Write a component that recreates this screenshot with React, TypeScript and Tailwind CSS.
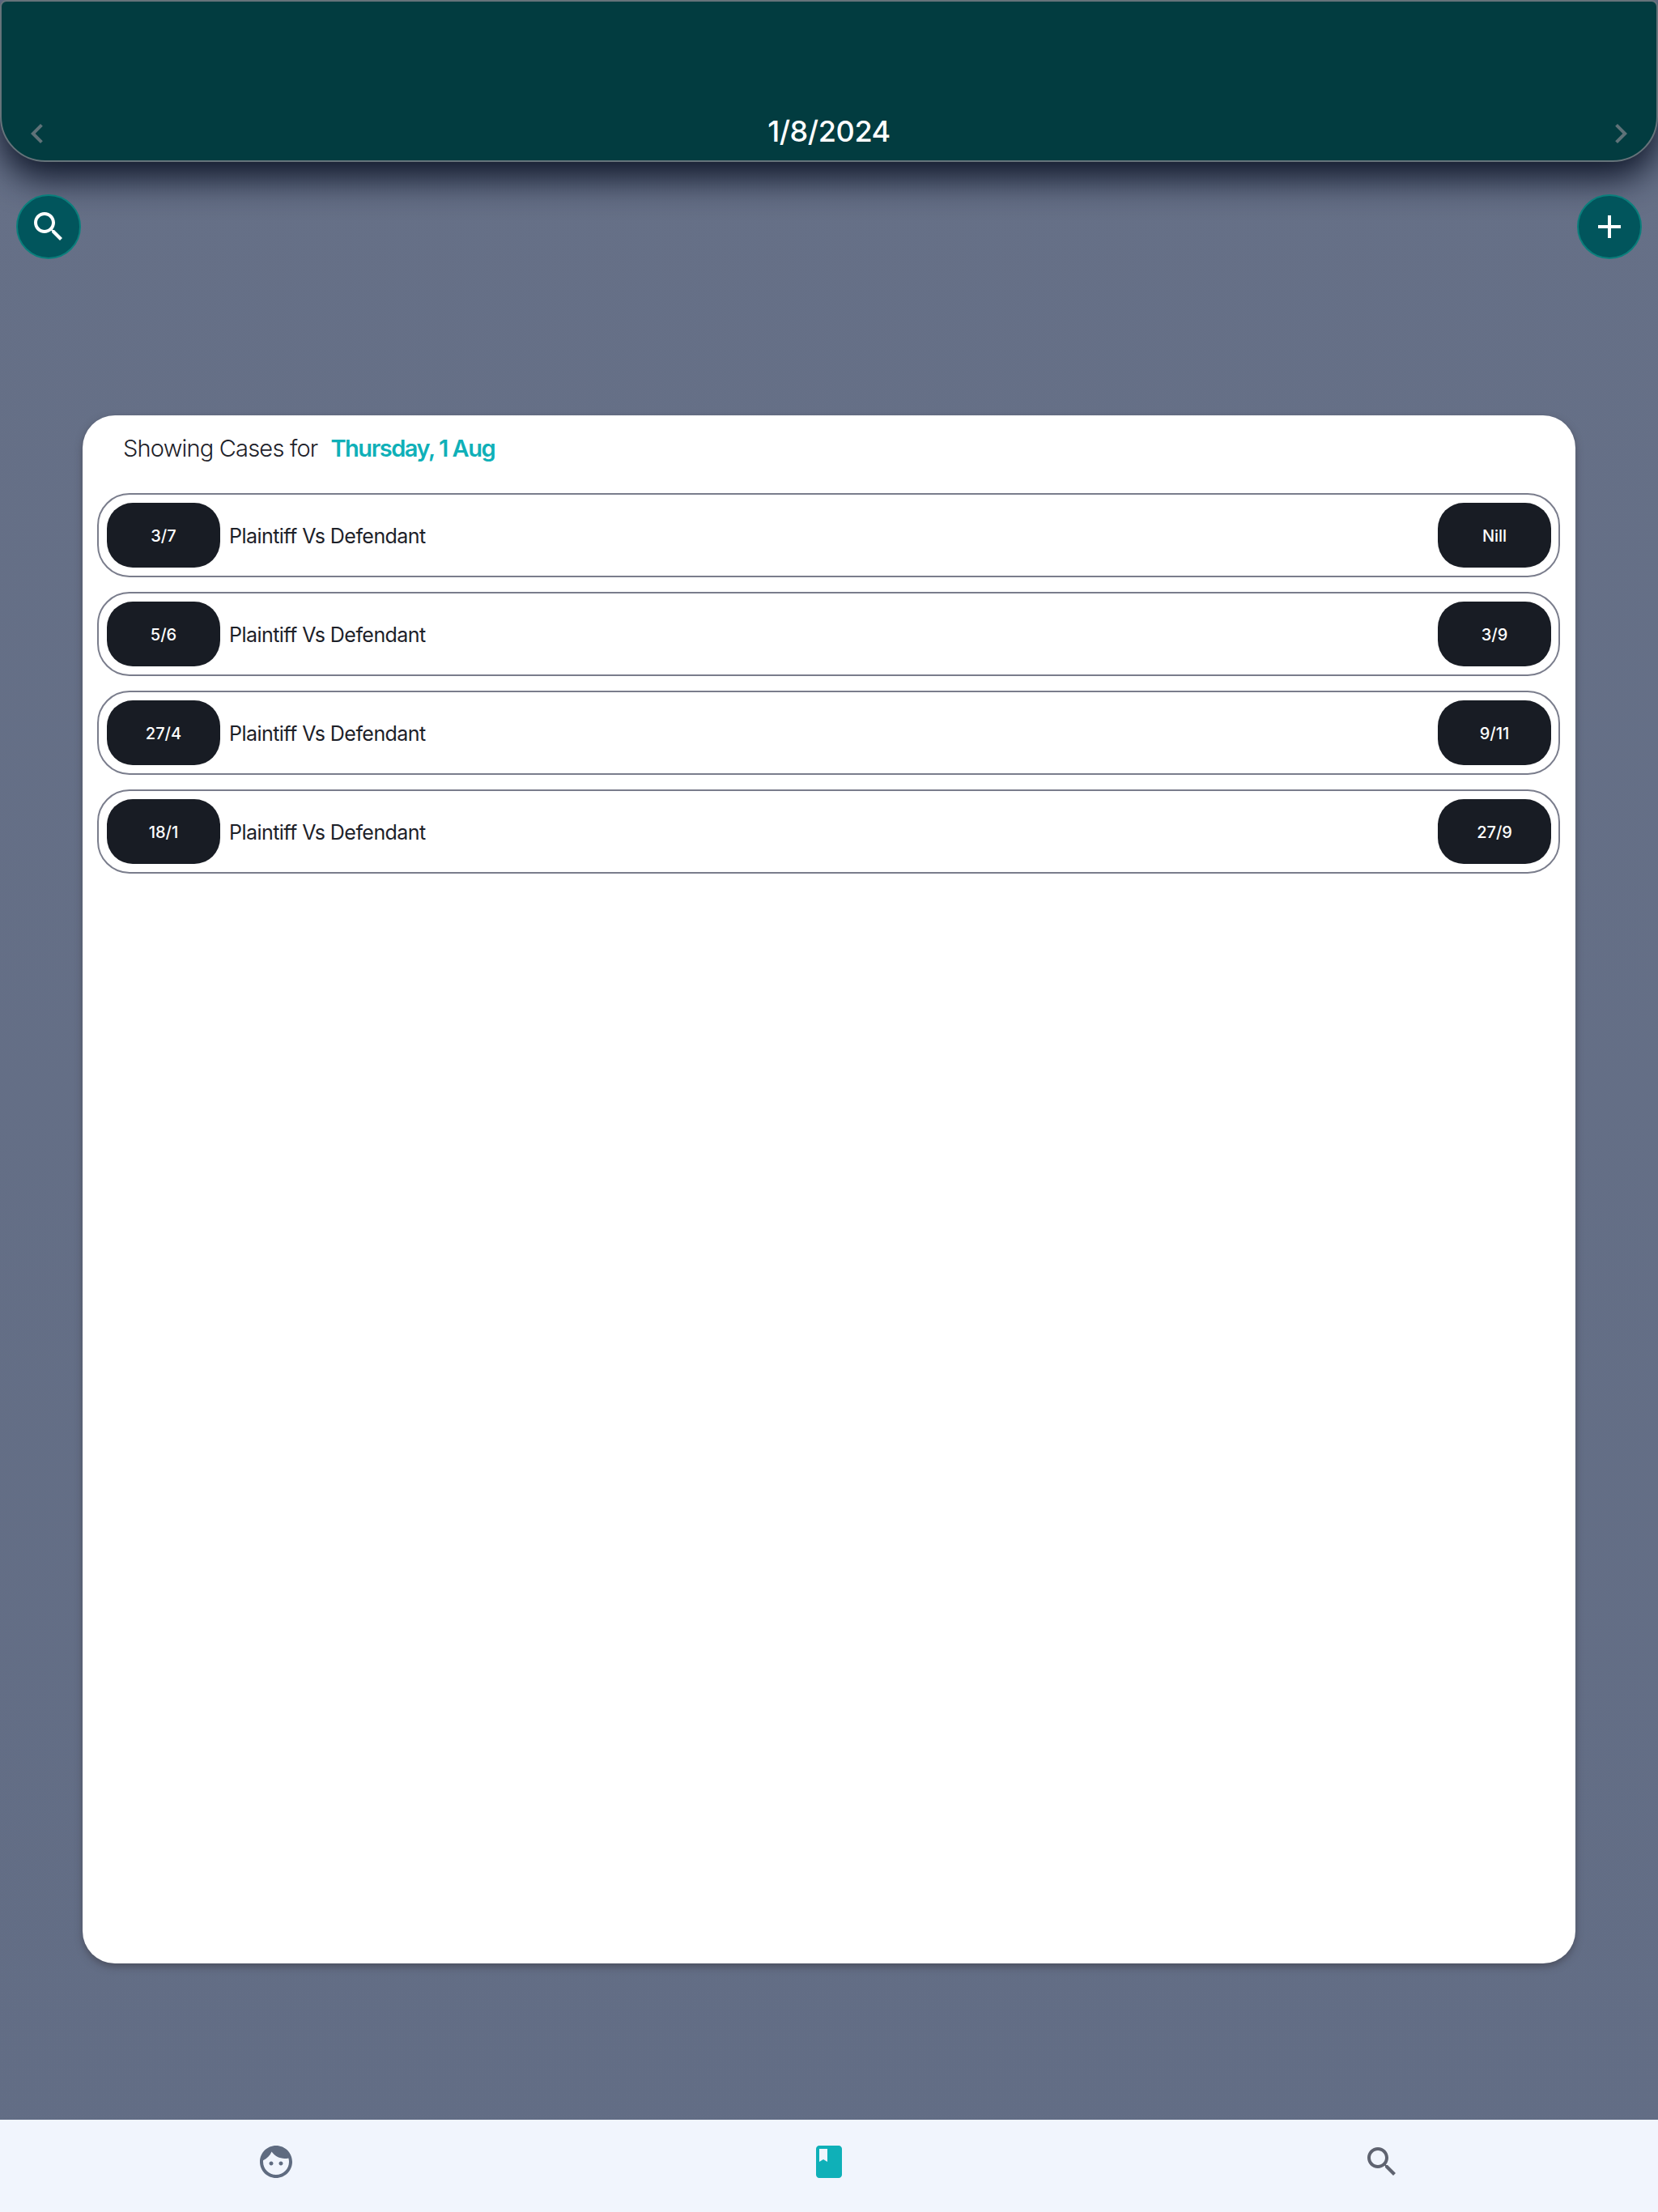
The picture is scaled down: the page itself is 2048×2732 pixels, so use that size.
import React from 'react';

const SEARCH_PATH =
  'M15.5 14h-.79l-.28-.27C15.41 12.59 16 11.11 16 9.5 16 5.91 13.09 3 9.5 3S3 5.91 3 9.5 5.91 16 9.5 16c1.61 0 3.09-.59 4.23-1.57l.27.28v.79l5 4.99L20.49 19l-4.99-5zm-6 0C7.01 14 5 11.99 5 9.5S7.01 5 9.5 5 14 7.01 14 9.5 11.99 14 9.5 14z';
const FACE_PATH =
  'M9 11.75c-.69 0-1.25.56-1.25 1.25s.56 1.25 1.25 1.25 1.25-.56 1.25-1.25-.56-1.25-1.25-1.25zm6 0c-.69 0-1.25.56-1.25 1.25s.56 1.25 1.25 1.25 1.25-.56 1.25-1.25-.56-1.25-1.25-1.25zM12 2C6.48 2 2 6.48 2 12s4.48 10 10 10 10-4.48 10-10S17.52 2 12 2zm0 18c-4.41 0-8-3.59-8-8 0-.29.02-.58.05-.86 2.36-1.05 4.23-2.98 5.21-5.37C11.07 8.33 14.05 10 17.42 10c.78 0 1.53-.09 2.25-.26.21.71.33 1.47.33 2.26 0 4.41-3.59 8-8 8z';
const BOOK_PATH =
  'M18 2H6c-1.1 0-2 .9-2 2v16c0 1.1.9 2 2 2h12c1.1 0 2-.9 2-2V4c0-1.1-.9-2-2-2zM6 4h5v8l-2.5-1.5L6 12V4z';
const ADD_PATH = 'M19 13h-6v6h-2v-6H5v-2h6V5h2v6h6v2z';
const CHEVRON_LEFT = 'M15.41 7.41 14 6l-6 6 6 6 1.41-1.41L10.83 12z';
const CHEVRON_RIGHT = 'M10 6 8.59 7.41 13.17 12l-4.58 4.59L10 18l6-6z';

const Icon = ({ d, className }: { d: string; className: string }) => (
  <svg viewBox="0 0 24 24" fill="currentColor" className={className}>
    <path d={d} />
  </svg>
);

const cases = [
  { from: '3/7', to: 'Nill' },
  { from: '5/6', to: '3/9' },
  { from: '27/4', to: '9/11' },
  { from: '18/1', to: '27/9' },
];

const Pill = ({ text }: { text: string }) => (
  <div className="flex h-[80px] w-[140px] shrink-0 items-center justify-center rounded-[32px] bg-[#181c24] pt-[2px] text-[20px] font-medium text-white">
    {text}
  </div>
);

const RoundButton = ({ d }: { d: string }) => (
  <button className="flex h-[80px] w-[80px] items-center justify-center rounded-full border-2 border-[#0b7f7c] bg-[#01555c] text-white">
    <Icon d={d} className="h-[48px] w-[48px]" />
  </button>
);

export default function App() {
  return (
    <div className="flex h-[2732px] w-[2048px] flex-col bg-gradient-to-b from-[#667087] to-[#626d85] font-['Inter',sans-serif]">
      {/* Date header */}
      <header className="flex h-[200px] shrink-0 items-end justify-between rounded-b-[56px] rounded-t-[8px] border-2 border-[#66737a] bg-[#023c40] px-[20px] pb-[9px] shadow-[0_20px_44px_rgba(15,23,42,1)]">
        <Icon d={CHEVRON_LEFT} className="h-[48px] w-[48px] text-[#5f7278]" />
        <span className="mb-[3px] text-[36px] font-medium leading-[48px] tracking-[-0.4px] text-white">1/8/2024</span>
        <Icon d={CHEVRON_RIGHT} className="h-[48px] w-[48px] text-[#5f7278]" />
      </header>

      <div className="mt-[40px] flex justify-between px-[20px]">
        <RoundButton d={SEARCH_PATH} />
        <RoundButton d={ADD_PATH} />
      </div>

      {/* Cases card */}
      <main className="mx-[102px] mt-[193px] flex h-[1912px] flex-col rounded-[40px] bg-white pl-[18px] pr-[19px] shadow-[0_4px_10px_rgba(60,60,70,0.6)]">
        <div className="mb-[14px] flex h-[82px] items-center pl-[32px] text-[29px] leading-[40px] tracking-[-0.8px] text-[#1d2129]">
          <span className="font-light">Showing Cases for</span>
          <span className="ml-[16px] font-semibold tracking-[-1.47px] text-[#0fb0b8]">Thursday, 1 Aug</span>
        </div>
        <div className="flex flex-col gap-[18px]">
          {cases.map((c) => (
            <div
              key={c.from}
              className="flex h-[104px] items-center justify-between rounded-[40px] border-2 border-[#7a7d8c] pl-[10px] pr-[9px]"
            >
              <div className="flex items-center gap-[11px]">
                <Pill text={c.from} />
                <span className="pt-[3px] text-[25px] font-normal tracking-[-0.55px] text-[#1d2129]">Plaintiff Vs Defendant</span>
              </div>
              <Pill text={c.to} />
            </div>
          ))}
        </div>
      </main>

      {/* Bottom tabs */}
      <nav className="mt-auto grid h-[114px] grid-cols-3 items-center bg-[#f1f5fd] pb-[11px]">
        <div className="flex justify-center">
          <Icon d={FACE_PATH} className="h-[48px] w-[48px] text-[#5f6b80]" />
        </div>
        <div className="flex justify-center">
          <Icon d={BOOK_PATH} className="h-[48px] w-[48px] text-[#0fb0b8]" />
        </div>
        <div className="flex justify-center">
          <Icon d={SEARCH_PATH} className="h-[48px] w-[48px] text-[#5f6370]" />
        </div>
      </nav>
    </div>
  );
}
